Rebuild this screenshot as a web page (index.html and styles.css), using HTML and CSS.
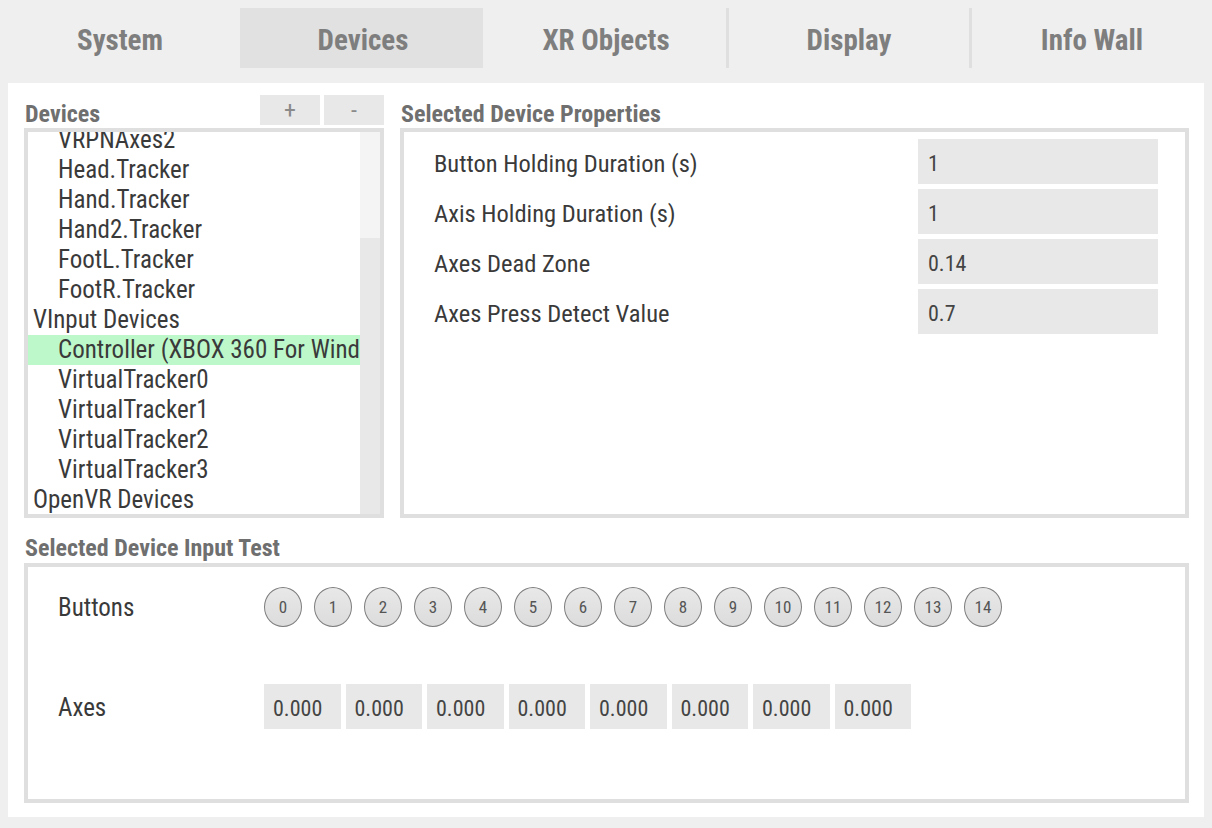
FILE: index.html
```html
<!DOCTYPE html>
<html lang="en">
<head>
<meta charset="utf-8">
<title>Devices</title>
<link rel="stylesheet" href="styles.css">
</head>
<body>
<nav class="tabs">
  <div class="tab">System</div>
  <div class="tab active">Devices</div>
  <div class="tab">XR Objects</div>
  <div class="tab sep">Display</div>
  <div class="tab sep">Info Wall</div>
</nav>
<main class="panel">
  <div class="top">
    <section class="col-devices">
      <div class="head-row">
        <h2 class="heading">Devices</h2>
        <div class="btns"><button class="btn">+</button><button class="btn">-</button></div>
      </div>
      <div class="box list-box">
        <ul class="list">
          <li class="item first">VRPNAxes2</li>
          <li class="item">Head.Tracker</li>
          <li class="item">Hand.Tracker</li>
          <li class="item">Hand2.Tracker</li>
          <li class="item">FootL.Tracker</li>
          <li class="item">FootR.Tracker</li>
          <li class="group">VInput Devices</li>
          <li class="item selected">Controller (XBOX 360 For Windows)</li>
          <li class="item">VirtualTracker0</li>
          <li class="item">VirtualTracker1</li>
          <li class="item">VirtualTracker2</li>
          <li class="item">VirtualTracker3</li>
          <li class="group">OpenVR Devices</li>
        </ul>
        <div class="scrollbar"><div class="track"></div><div class="thumb"></div></div>
      </div>
    </section>
    <section class="col-props">
      <div class="head-row">
        <h2 class="heading">Selected Device Properties</h2>
      </div>
      <div class="box props">
        <div class="prop"><span class="prop-label">Button Holding Duration (s)</span><span class="field">1</span></div>
        <div class="prop"><span class="prop-label">Axis Holding Duration (s)</span><span class="field">1</span></div>
        <div class="prop"><span class="prop-label">Axes Dead Zone</span><span class="field">0.14</span></div>
        <div class="prop"><span class="prop-label">Axes Press Detect Value</span><span class="field">0.7</span></div>
      </div>
    </section>
  </div>
  <h2 class="heading heading-test">Selected Device Input Test</h2>
  <div class="box test">
    <div class="test-row">
      <span class="test-label">Buttons</span>
      <div class="circles">
        <span class="circle">0</span><span class="circle">1</span><span class="circle">2</span><span class="circle">3</span><span class="circle">4</span><span class="circle">5</span><span class="circle">6</span><span class="circle">7</span><span class="circle">8</span><span class="circle">9</span><span class="circle">10</span><span class="circle">11</span><span class="circle">12</span><span class="circle">13</span><span class="circle">14</span>
      </div>
    </div>
    <div class="test-row">
      <span class="test-label">Axes</span>
      <div class="axes">
        <span class="axis">0.000</span><span class="axis">0.000</span><span class="axis">0.000</span><span class="axis">0.000</span><span class="axis">0.000</span><span class="axis">0.000</span><span class="axis">0.000</span><span class="axis">0.000</span>
      </div>
    </div>
  </div>
</main>
</body>
</html>
```
FILE: styles.css
```css
* { box-sizing: border-box; }
html, body { margin: 0; padding: 0; }
body {
  width: 1212px;
  height: 828px;
  overflow: hidden;
  background: #efefef;
  font-family: Roboto, "Liberation Sans", sans-serif;
  font-stretch: 75%;
  color: #3a3a3a;
}
.tabs {
  display: flex;
  padding-top: 8px;
  margin-bottom: 15px;
}
.tab {
  flex: 1 1 0;
  height: 60px;
  padding-top: 4px;
  line-height: 56px;
  text-align: center;
  font-size: 29px;
  font-weight: bold;
  color: #7e7e7e;
  border-left: 3px solid transparent;
}
.tab:first-child { border-left: 0; }
.tab.sep { border-left-color: #dfdfdf; }
.tab.active { background: #e1e1e1; }

.panel {
  margin: 0 8px;
  height: 734px;
  background: #fff;
  padding: 12px 15px 0 16px;
}
.top {
  display: flex;
  gap: 16px;
}
.col-devices { width: 360px; }
.col-props { flex: 1; }
.head-row {
  display: flex;
  justify-content: space-between;
  height: 30px;
  margin-bottom: 3px;
}
.heading {
  margin: 4px 0 0 0;
  padding-left: 1px;
  font-size: 24px;
  line-height: 30px;
  font-weight: bold;
  color: #6f6f6f;
}
.btns { display: flex; gap: 4px; }
.btn {
  width: 60px;
  height: 30px;
  border: 0;
  padding: 0;
  background: #e8e8e8;
  color: #8a8a8a;
  font-family: inherit;
  font-stretch: inherit;
  font-size: 24px;
  line-height: 30px;
}
.box {
  border: 4px solid #dfdfdf;
  background: #fff;
}
.list-box {
  height: 390px;
  display: flex;
}
.list {
  flex: 1;
  list-style: none;
  margin: 0;
  padding: 0;
  overflow: hidden;
  font-size: 25px;
}
.list li {
  height: 30px;
  line-height: 30px;
  white-space: nowrap;
  overflow: hidden;
}
.list .first { margin-top: -7px; }
.group { padding-left: 5px; }
.item { padding-left: 30px; }
.item.selected { background: #bdf8ca; }
.scrollbar {
  width: 20px;
  display: flex;
  flex-direction: column;
}
.track { height: 106px; background: #f4f4f4; }
.thumb { flex: 1; background: #e8e8e8; }

.props {
  height: 390px;
  padding: 7px 27px 0 30px;
  display: flex;
  flex-direction: column;
  gap: 5px;
}
.prop {
  display: flex;
  justify-content: space-between;
  align-items: center;
  height: 45px;
}
.prop-label {
  font-size: 24.5px;
  padding-top: 3px;
}
.field {
  width: 240px;
  height: 45px;
  background: #e8e8e8;
  padding: 4px 0 0 10px;
  line-height: 41px;
  font-size: 22px;
  color: #444;
}
.heading-test {
  margin-top: 15px;
  height: 30px;
}
.test {
  height: 240px;
  padding: 17px 0 0 30px;
  display: flex;
  flex-direction: column;
  gap: 55px;
}
.test-row {
  display: flex;
  align-items: center;
  height: 45px;
}
.test-label {
  width: 206px;
  font-size: 25px;
  padding-top: 2px;
}
.circles { display: flex; gap: 12px; }
.circle {
  width: 38px;
  height: 40px;
  border-radius: 50%;
  border: 1px solid #7e7e7e;
  background: linear-gradient(#e8e8e8, #dcdcdc);
  display: flex;
  align-items: center;
  justify-content: center;
  font-size: 17px;
  color: #555;
}
.axes { display: flex; gap: 5px; }
.axis {
  width: 76.5px;
  height: 45px;
  background: #e8e8e8;
  padding: 4px 0 0 9px;
  line-height: 41px;
  font-size: 22px;
  color: #444;
}
```
